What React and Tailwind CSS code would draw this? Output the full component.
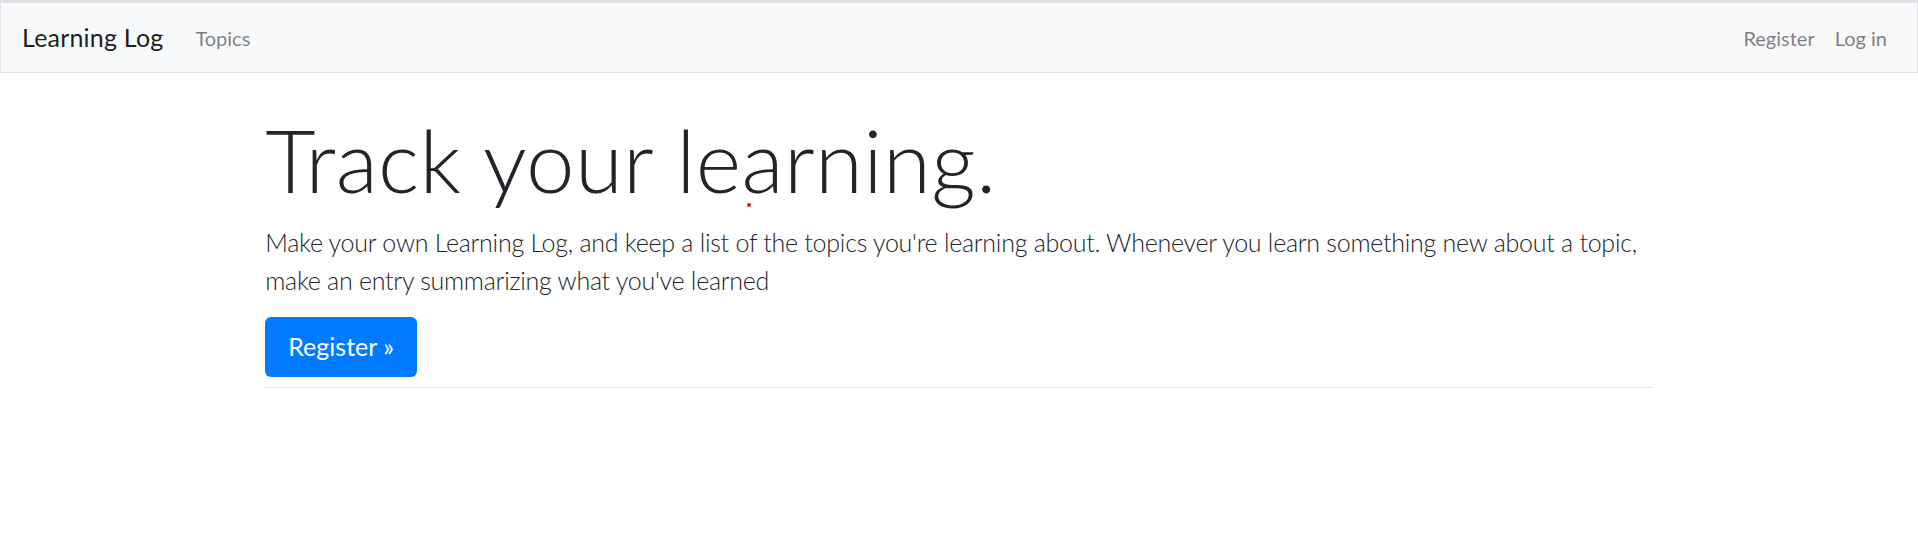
export default function App() {
  return (
    <div className="min-h-[555px] bg-white" style={{ fontFamily: '"Segoe UI", Lato, "Noto Sans", sans-serif' }}>
      <div className="h-[3px] bg-[#dfe1e4]" />
      <nav className="flex h-[70px] items-center justify-between border-x border-b border-[#dee2e6] bg-[#f8f9fa] px-[20px]">
        <div className="flex items-center">
          <a className="mr-[22px] ml-[1px] text-[25px] leading-[37.5px] tracking-[0.2px] text-[rgba(0,0,0,0.9)]">Learning Log</a>
          <a className="px-[10px] text-[20px] leading-[30px] text-[rgba(0,0,0,0.5)]">Topics</a>
        </div>
        <div className="flex items-center">
          <a className="px-[10px] text-[20px] leading-[30px] text-[rgba(0,0,0,0.5)]">Register</a>
          <a className="px-[10px] text-[20px] leading-[30px] text-[rgba(0,0,0,0.5)]">Log in</a>
        </div>
      </nav>
      <main className="mx-auto max-w-[1425px] px-[18.75px]">
        <div className="relative">
          <h1 className="mt-[33px] mb-[10px] text-[87px] font-light leading-[108px] tracking-[0.35px] text-[#212529]">Track your learning.</h1>
          <span className="absolute top-[97px] left-[482px] h-[4px] w-[4px] rounded-full bg-[#e81123]" />
        </div>
        <p className="mb-[18px] text-[25px] font-light leading-[37.5px] tracking-[-0.26px] text-[#212529]">
          Make your own Learning Log, and keep a list of the topics you're learning about. Whenever you learn something new about a topic, make an entry summarizing what you've learned
        </p>
        <button className="h-[60px] rounded-[6px] bg-[#007bff] px-[23px] text-[25px] leading-[37.5px] text-white">Register »</button>
        <hr className="mt-[10px] border-t border-[rgba(0,0,0,0.1)]" />
      </main>
    </div>
  );
}
